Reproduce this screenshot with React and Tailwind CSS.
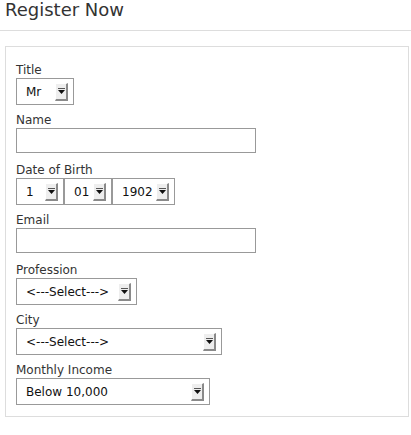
const font = { fontFamily: '"DejaVu Sans", Verdana, sans-serif' };

function Arrow() {
  return (
    <span className="flex h-[18px] w-[13px] shrink-0 items-center justify-center border-t border-l border-t-white border-l-white border-r-2 border-b-2 border-r-[#8a8a8a] border-b-[#8a8a8a] bg-[#eeeeee]">
      <svg width="7" height="6" viewBox="0 0 7 6">
        <rect x="0" y="0" width="7" height="1" fill="#555" />
        <path d="M0 2h7L3.5 6z" fill="#111" />
      </svg>
    </span>
  );
}

function Select({ value, width }) {
  return (
    <div
      className={`flex h-[27px] ${width} shrink-0 items-center justify-between border border-[#999] bg-white pl-[9px] pr-[5px] text-[12px] text-[#111]`}
    >
      <span className="whitespace-nowrap">{value}</span>
      <Arrow />
    </div>
  );
}

function Field({ label, children, last }) {
  return (
    <div className={`flex flex-col ${last ? "" : "h-[50px]"}`}>
      <label className="block text-[12px] leading-[15px] text-[#333]">{label}</label>
      {children}
    </div>
  );
}

function TextInput() {
  return <input type="text" className="h-[25px] w-[240px] border border-[#999] bg-white outline-none" />;
}

export default function App() {
  return (
    <div className="w-[411px] h-[435px] bg-white pt-px" style={font}>
      <div className="h-[30px] border-b border-[#dddddd] pl-[5px]">
        <h2 className="text-[18px] leading-[18px] text-[#333]">Register Now</h2>
      </div>

      <form className="mt-[15px] ml-[5px] mr-[2px] flex flex-col border border-[#dddddd] pt-[16px] pb-[11px] pl-[10px]">
        <Field label="Title">
          <Select value="Mr" width="w-[58px]" />
        </Field>
        <Field label="Name">
          <TextInput />
        </Field>
        <Field label="Date of Birth">
          <div className="flex">
            <Select value="1" width="w-[48px]" />
            <Select value="01" width="w-[48px]" />
            <Select value="1902" width="w-[63px]" />
          </div>
        </Field>
        <Field label="Email">
          <TextInput />
        </Field>
        <Field label="Profession">
          <Select value="<---Select--->" width="w-[121px]" />
        </Field>
        <Field label="City">
          <Select value="<---Select--->" width="w-[206px]" />
        </Field>
        <Field label="Monthly Income" last>
          <Select value="Below 10,000" width="w-[194px]" />
        </Field>
      </form>
    </div>
  );
}
